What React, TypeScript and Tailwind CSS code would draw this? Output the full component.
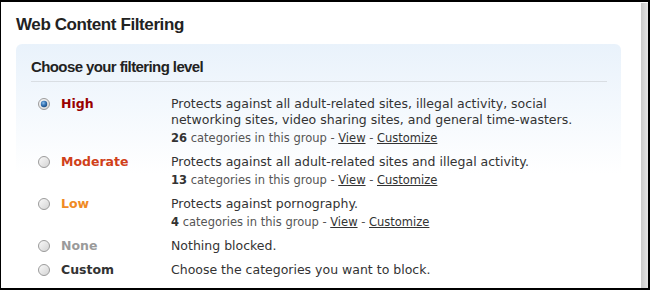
import React from "react";

type Level = {
  name: string;
  color: string;
  desc: string;
  count?: number;
  selected?: boolean;
};

const levels: Level[] = [
  {
    name: "High",
    color: "text-[#990000]",
    desc: "Protects against all adult-related sites, illegal activity, social networking sites, video sharing sites, and general time-wasters.",
    count: 26,
    selected: true,
  },
  {
    name: "Moderate",
    color: "text-[#d0401a]",
    desc: "Protects against all adult-related sites and illegal activity.",
    count: 13,
  },
  {
    name: "Low",
    color: "text-[#f08a24]",
    desc: "Protects against pornography.",
    count: 4,
  },
  { name: "None", color: "text-[#9a9a9a]", desc: "Nothing blocked." },
  { name: "Custom", color: "text-[#333333]", desc: "Choose the categories you want to block." },
];

function Radio({ selected, id }: { selected?: boolean; id: string }) {
  return (
    <svg width="12" height="12" viewBox="0 0 12 12" className="block">
      <defs>
        <linearGradient id={`g-${id}`} x1="0" y1="0" x2="1" y2="1">
          <stop offset="0" stopColor="#fbfbfb" />
          <stop offset="1" stopColor="#d2d2d2" />
        </linearGradient>
        <radialGradient id={`b-${id}`} cx="0.4" cy="0.35" r="0.7">
          <stop offset="0" stopColor="#8fc0ea" />
          <stop offset="0.5" stopColor="#3a78b8" />
          <stop offset="1" stopColor="#17487e" />
        </radialGradient>
      </defs>
      <circle cx="6" cy="6" r="5.5" fill={`url(#g-${id})`} stroke="#9b9b9b" strokeWidth="1" />
      {selected && <circle cx="6" cy="6" r="3.2" fill={`url(#b-${id})`} />}
    </svg>
  );
}

export default function App() {
  return (
    <div className="w-[650px] h-[290px] overflow-hidden bg-white border-t-2 border-b-2 border-l border-r-2 border-black flex">
      <div className="flex-1 pl-[15px] pt-[13px] pr-[20px]">
        <h1
          className="text-[17px] leading-[20px] font-bold text-[#222] tracking-[-0.4px]"
          style={{ fontFamily: '"Liberation Sans", Arial, sans-serif' }}
        >
          Web Content Filtering
        </h1>
        <div className="mt-[9px] rounded-[6px] bg-[linear-gradient(to_bottom,#e9f2fb_0px,#f3f8fd_60px,#ffffff_130px)] pl-[15px] pr-[14px] pt-[14px] pb-[20px]">
          <h2
            className="text-[15px] leading-[18px] font-bold text-[#222] tracking-[-0.6px] pb-[5px] border-b border-[#d9dee3]"
            style={{ fontFamily: '"Liberation Sans", Arial, sans-serif' }}
          >
            Choose your filtering level
          </h2>
          <div
            className="mt-[14px] flex flex-col gap-[8px]"
            style={{ fontFamily: '"DejaVu Sans", Verdana, sans-serif' }}
          >
            {levels.map((l) => (
              <div key={l.name} className="flex items-start">
                <div className="ml-[7px] mt-[2px] w-[12px] shrink-0">
                  <Radio selected={l.selected} id={l.name} />
                </div>
                <div className={`ml-[11px] w-[110px] shrink-0 text-[12.5px] leading-[16px] font-bold ${l.color}`}>
                  {l.name}
                </div>
                <div className="flex-1 text-[12.5px] leading-[16px] text-[#333]">
                  <div className="pr-[20px]">{l.desc}</div>
                  {l.count !== undefined && (
                    <div className="mt-[3px] text-[11.5px] leading-[15px] text-[#555]">
                      <span className="font-bold text-[#333]">{l.count}</span> categories in this group -{" "}
                      <span className="underline text-[#333]">View</span> -{" "}
                      <span className="underline text-[#333]">Customize</span>
                    </div>
                  )}
                </div>
              </div>
            ))}
          </div>
        </div>
      </div>
      <div className="w-[7px] shrink-0 bg-[linear-gradient(to_right,#c9c9c9,#e4e4e4)] mt-[1px]" />
    </div>
  );
}
